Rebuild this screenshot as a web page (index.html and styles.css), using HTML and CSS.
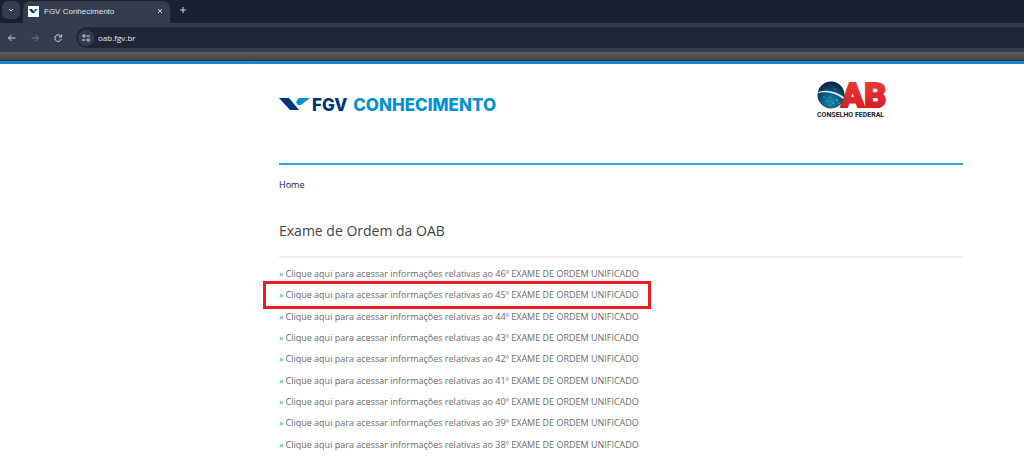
FILE: index.html
```
<!DOCTYPE html>
<html lang="pt-BR">
<head>
    <meta charset="UTF-8">
    <meta name="viewport" content="width=device-width, initial-scale=1.0">
    <title>FGV Conhecimento</title>
    <link rel="stylesheet" href="styles.css">
</head>
<body>
    <!-- Navegador -->
    <div class="browser">
        <div class="tabs">
            <button class="tab-search" aria-label="Pesquisar guias">
                <svg width="8" height="8" viewBox="0 0 8 8"><path d="M2 3l2 2 2-2"/></svg>
            </button>
            <div class="tab">
                <svg class="favicon" width="11" height="11" viewBox="0 0 11 11">
                    <rect width="11" height="11" fill="#fff"/>
                    <path d="M1 3h3l3 4H4z" fill="#003478"/>
                    <path d="M7 3h3L7 6 5.500 5z" fill="#1568a8"/>
                </svg>
                <span class="tab-title">FGV Conhecimento</span>
                <button class="icon-button" aria-label="Fechar guia">
                    <svg width="8" height="8" viewBox="0 0 8 8"><path d="M2 2l4 4M6 2l-4 4"/></svg>
                </button>
            </div>
            <button class="icon-button new-tab" aria-label="Nova guia">
                <svg width="8" height="8" viewBox="0 0 8 8"><path d="M4 1v6M1 4h6"/></svg>
            </button>
        </div>
        <div class="toolbar">
            <button class="icon-button" aria-label="Voltar">
                <svg width="10" height="10" viewBox="0 0 10 10"><path d="M8.500 5h-7M4.500 2l-3 3 3 3"/></svg>
            </button>
            <button class="icon-button disabled" aria-label="Avançar" disabled>
                <svg width="10" height="10" viewBox="0 0 10 10"><path d="M1.500 5h7M5.500 2l3 3-3 3"/></svg>
            </button>
            <button class="icon-button" aria-label="Recarregar">
                <svg width="10" height="10" viewBox="0 0 10 10"><path d="M8 3.500A3.300 3.300 0 1 0 8.300 6M8.500 1.500v2.500H6"/></svg>
            </button>
            <div class="address">
                <button class="site-info" aria-label="Informações do site">
                    <svg width="10" height="10" viewBox="0 0 10 10"><circle cx="3" cy="3" r="1.200"/><path d="M5.500 3H9M1 7h3.500"/><circle cx="7.300" cy="7" r="1.200"/></svg>
                </button>
                <input class="url" type="text" value="oab.fgv.br" aria-label="Endereço">
            </div>
        </div>
    </div>

    <div class="top-bar"></div>

    <div class="page">
        <!-- Logos -->
        <header class="header">
            <a href="#" class="fgv">
                <svg width="31" height="13" viewBox="0 0 31 13">
                    <path d="M0 0h10l10 12H11z" fill="#003478"/>
                    <path d="M20 0h11L22 7h-3l-2-3z" fill="#0091d4"/>
                </svg>
                <span class="fgv-name">FGV <span>CONHECIMENTO</span></span>
            </a>
            <a href="#" class="oab" aria-label="OAB Conselho Federal">
                <svg width="68" height="38" viewBox="0 0 68 38">
                    <defs>
                        <radialGradient id="globe" cx="50%" cy="75%" r="70%">
                            <stop offset="0" stop-color="#1787ad"/>
                            <stop offset="0.500" stop-color="#0b5a83"/>
                            <stop offset="1" stop-color="#092447"/>
                        </radialGradient>
                        <linearGradient id="red" x1="0" y1="0" x2="0" y2="1">
                            <stop offset="0" stop-color="#f0403a"/>
                            <stop offset="1" stop-color="#cf1820"/>
                        </linearGradient>
                    </defs>
                    <text class="oab-letters" x="24" y="26" fill="url(#red)" stroke="url(#red)">AB</text>
                    <circle cx="14" cy="14" r="13.500" fill="url(#globe)"/>
                    <path d="M1 11q13-4 26 5l-1 2Q15 9 1 12z" fill="#d5e9ef"/>
                    <g fill="#a8d5e2">
                        <circle cx="7" cy="16" r=".6"/><circle cx="10" cy="20" r=".6"/>
                        <circle cx="13" cy="16" r=".6"/><circle cx="16" cy="22" r=".6"/>
                        <circle cx="20" cy="19" r=".7"/><circle cx="18" cy="8" r=".5"/>
                        <circle cx="13" cy="24" r=".6"/><circle cx="22" cy="22" r=".5"/>
                    </g>
                    <text class="oab-caption" x="0" y="36">CONSELHO FEDERAL</text>
                </svg>
            </a>
        </header>

        <nav class="breadcrumb"><a href="#">Home</a></nav>

        <main>
            <h1>Exame de Ordem da OAB</h1>
            <ul class="exams">
                <li><a href="#">Clique aqui para acessar informações relativas ao 46º EXAME DE ORDEM UNIFICADO</a></li>
                <li class="selected"><a href="#">Clique aqui para acessar informações relativas ao 45º EXAME DE ORDEM UNIFICADO</a></li>
                <li><a href="#">Clique aqui para acessar informações relativas ao 44º EXAME DE ORDEM UNIFICADO</a></li>
                <li><a href="#">Clique aqui para acessar informações relativas ao 43º EXAME DE ORDEM UNIFICADO</a></li>
                <li><a href="#">Clique aqui para acessar informações relativas ao 42º EXAME DE ORDEM UNIFICADO</a></li>
                <li><a href="#">Clique aqui para acessar informações relativas ao 41º EXAME DE ORDEM UNIFICADO</a></li>
                <li><a href="#">Clique aqui para acessar informações relativas ao 40º EXAME DE ORDEM UNIFICADO</a></li>
                <li><a href="#">Clique aqui para acessar informações relativas ao 39º EXAME DE ORDEM UNIFICADO</a></li>
                <li><a href="#">Clique aqui para acessar informações relativas ao 38º EXAME DE ORDEM UNIFICADO</a></li>
            </ul>
        </main>
    </div>
</body>
</html>
```
FILE: styles.css
```
/* Estilos gerais */
* {
    box-sizing: border-box;
}

body {
    margin: 0;
    background: #fff;
    font-family: 'Open Sans', sans-serif;
    font-size: 9px;
    color: #333;
}

a {
    color: inherit;
    text-decoration: none;
}

button {
    display: flex;
    align-items: center;
    justify-content: center;
    padding: 0;
    border: none;
    background: none;
    cursor: pointer;
}

button svg {
    flex: none;
    fill: none;
    stroke: #cdd3e0;
    stroke-width: 1;
}

/* Navegador */
.browser {
    background: #343c4e;
}

.tabs {
    display: flex;
    align-items: flex-end;
    height: 23px;
    padding-left: 2px;
    background: #182130;
}

.tab-search {
    width: 18px;
    height: 18px;
    margin-bottom: 4px;
    border-radius: 6px;
    background: #343c4e;
}

.tab {
    display: flex;
    align-items: center;
    width: 147px;
    height: 22px;
    margin-left: 3px;
    padding: 0 5px 2px;
    border-radius: 7px 7px 0 0;
    background: #343c4e;
}

.tab-title {
    flex: 1;
    margin-left: 5px;
    font-family: 'Liberation Sans', sans-serif;
    font-size: 8px;
    color: #dfe3ec;
}

.icon-button {
    width: 10px;
    height: 10px;
}

.new-tab {
    margin: 0 0 8px 8px;
}

.toolbar {
    display: flex;
    align-items: center;
    gap: 13px;
    height: 29px;
    padding-left: 7px;
}

.disabled {
    opacity: 0.4;
}

.address {
    display: flex;
    flex: 1;
    align-items: center;
    gap: 4px;
    height: 21px;
    padding-left: 2px;
    border-radius: 11px 0 0 11px;
    background: #1e2637;
}

.site-info {
    width: 16px;
    height: 16px;
    border-radius: 50%;
    background: #343c4e;
}

.url {
    flex: 1;
    padding: 0;
    border: none;
    outline: none;
    background: none;
    font-family: inherit;
    font-size: 8px;
    color: #e8ebf2;
}

/* Barra do topo */
.top-bar {
    height: 12px;
    border-bottom: 3px solid #0b8dd0;
    background: linear-gradient(#5c5c5c, #484848 80%, #333);
}

.page {
    margin: 0 61px 0 279px;
}

/* Cabeçalho */
.header {
    display: flex;
    justify-content: space-between;
    padding: 17px 78px 0 0;
    height: 101px;
    border-bottom: 2px solid #36a5d8;
}

.fgv {
    display: flex;
    align-items: center;
    gap: 2px;
    height: 47px;
}

.fgv-name {
    font-family: Inter, sans-serif;
    font-size: 17px;
    font-weight: 800;
    color: #003478;
}

.fgv-name span {
    margin-left: 2px;
    color: #0091d4;
}

.oab svg {
    overflow: visible;
}

.oab-letters {
    font-family: Roboto, sans-serif;
    font-size: 34px;
    font-weight: 900;
    stroke-width: 2;
}

.oab-caption {
    font-family: Roboto, sans-serif;
    font-size: 7px;
    font-weight: 700;
    fill: #222;
}

/* Conteúdo */
.breadcrumb {
    padding-top: 13px;
    line-height: 14px;
    color: #222;
}

h1 {
    margin: 29px 0 5px;
    padding-bottom: 15px;
    border-bottom: 2px solid #f0f0f0;
    font-size: 14px;
    font-weight: 400;
    line-height: 20px;
    color: #444;
}

.exams {
    display: grid;
    grid-auto-rows: 1fr;
    min-height: 192px;
    margin: 0;
    padding: 0;
    list-style: none;
    color: #6c6c6c;
}

.exams li {
    display: flex;
    align-items: center;
    justify-self: start;
}

.exams li::before {
    content: '»';
    margin-right: 2px;
    color: #36a5e0;
}

/* Item em destaque */
.selected {
    margin: -3px 0 -3px -16px;
    padding: 0 9px 0 13px;
    border: 3px solid #ed1c24;
}
```
